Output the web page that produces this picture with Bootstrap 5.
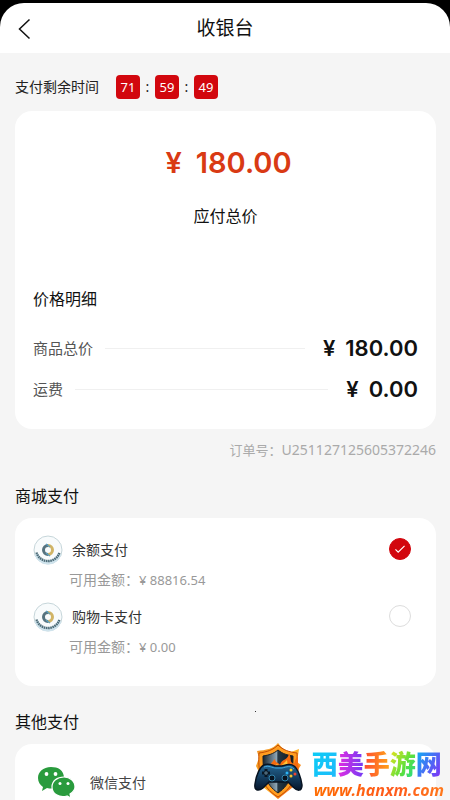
<!DOCTYPE html>
<html lang="zh-CN">
<head>
<meta charset="utf-8">
<meta name="viewport" content="width=device-width, initial-scale=1">
<title>收银台</title>
<link href="https://cdn.jsdelivr.net/npm/bootstrap@5.3.0/dist/css/bootstrap.min.css" rel="stylesheet">
<style>
body{background:#f5f5f5;color:#111;font-family:"Noto Sans","Noto Sans CJK SC",sans-serif;font-size:14px;line-height:20px;overflow-x:hidden}
.status{background:#000;padding-top:3px}
.topbar{background:#fff;height:50px;border-radius:24px 24px 0 0;display:grid;grid-template-columns:50px 1fr 50px}
.topbar h1{font-size:19px;line-height:26px;font-weight:400}
.content{padding:0 14px 0 15px}
.timer{padding:21px 0 12px;color:#222;height:58px;gap:17px}
.tick{background:#d2070e;color:#fff;width:24px;height:24px;border-radius:4px;line-height:24px;text-align:center;font-size:13px}
.sep{width:15px;text-align:center}
.panel{background:#fff;border:0;border-radius:17px}
.price{padding:36px 18px 28px}
.total{font-family:Inter,"Noto Sans",sans-serif;font-size:29px;line-height:32px;font-weight:600;color:#d93a14;gap:14px;padding-left:6px}
.total-label{font-size:16px;line-height:24px;margin-top:25px}
.t16{font-size:16px;line-height:24px;font-weight:400}
.breakdown{margin-top:59px}
.fee{font-size:15px;line-height:24px;color:#555}
.fee-list{gap:17px;margin-top:25px}
.rule{height:1px;background:#f0f0f0;margin:0 18px 0 12px}
.amount{font-family:Inter,"Noto Sans",sans-serif;font-size:22px;font-weight:600;color:#111;gap:10px}
.order{color:#aaa;padding-top:11px}
.label-small,.money{font-size:13px}
.section-title{margin-bottom:10px}
.methods{padding:16px 21px 29px 18px}
.pay-row{height:32px}
.pay-row label{color:#333;margin-left:9px}
.seal{width:30px;height:30px}
.balance{color:#999;padding-left:36px;margin:4px 0 11px}
.pick{width:22px;height:22px;margin:0 4px 3px 0;border:1px solid #ddd;box-shadow:none!important}
.pick:checked{background-color:#d2070e;border-color:#d2070e;background-image:url("data:image/svg+xml,%3Csvg xmlns='http://www.w3.org/2000/svg' viewBox='0 0 22 22'%3E%3Cpath d='M6 11.5 9 14.5 16 7.5' fill='none' stroke='white' stroke-width='1.3'/%3E%3C/svg%3E")}
.other{border-radius:17px 17px 0 0;padding:22px 22px 0;min-height:56px}
.wechat{gap:14px;color:#444;font-size:14px;line-height:20px}
.brand{position:fixed;right:4px;bottom:0;height:58px;gap:8px;text-decoration:none}
.brand-text{padding-top:4px}
.brand-name{font:900 26px/34px "Noto Sans CJK SC",sans-serif}
.brand-name span,.brand-url{background-clip:text;-webkit-background-clip:text;color:transparent}
.c1{background-image:linear-gradient(120deg,#08cff5,#21b8fb)}
.c2{background-image:linear-gradient(90deg,#e12ce1,#713bf5)}
.c3{background-image:linear-gradient(90deg,#ff4b32,#ffa417)}
.c4{background-image:linear-gradient(120deg,#ffe218,#5be03c 60%,#18d8a0)}
.c5{background-image:linear-gradient(120deg,#00bdf2,#8c24f7)}
.brand-url{font:italic 700 16px/20px "Open Sans",sans-serif;padding:0 2px;background-image:linear-gradient(90deg,#ff6d00,#ff5a1c 60%,#ff7a1c)}
.speck{position:absolute;left:255px;top:711px;width:1px;height:1px;background:#333}
</style>
<script src="https://cdn.jsdelivr.net/npm/bootstrap@5.3.0/dist/js/bootstrap.bundle.min.js"></script>
</head>
<body class="d-flex flex-column min-vh-100 position-relative">
<svg class="d-none" aria-hidden="true">
<symbol id="seal" viewBox="0 0 30 30">
<circle cx="15" cy="15" r="14" fill="#f8fbfc" stroke="#b9cbd1" stroke-width=".8"/>
<path d="M3.5 19a12 12 0 0 0 23 0" fill="none" stroke="#cfe3ec" stroke-width="4"/>
<path d="M3.500 17.500a12 12 0 0 0 23 0" fill="none" stroke="#4c6b77" stroke-width="2.400" stroke-dasharray="1.600 .6"/>
<path d="M15 10.500a4.500 4.500 0 0 0 0 9" fill="none" stroke="#56727e" stroke-width="3"/>
<path d="M15 10.500a4.500 4.500 0 0 1 0 9" fill="none" stroke="#d1b465" stroke-width="3"/>
<path d="M13 9l4 3M17 21l-4-3" stroke="#5b9fc0" stroke-width="1.300"/>
</symbol>
</svg>
<header class="status">
<div class="topbar align-items-center">
<button class="btn p-0 border-0 h-100 text-start ps-3" aria-label="返回"><svg width="16" height="22" viewBox="0 0 16 22"><path d="M13.500 1.500 3.500 11l10 9.500" fill="none" stroke="#111" stroke-width="1.500"/></svg></button>
<h1 class="m-0 text-center">收银台</h1>
</div>
</header>
<main class="content d-flex flex-column flex-grow-1">
<div class="timer d-flex align-items-center"><span>支付剩余时间</span><span class="d-flex align-items-center"><span class="tick">71</span><span class="sep">:</span><span class="tick">59</span><span class="sep">:</span><span class="tick">49</span></span></div>
<section class="panel price">
<div class="total d-flex justify-content-center"><span>¥</span><span>180.00</span></div>
<div class="total-label text-center">应付总价</div>
<h2 class="t16 breakdown mb-0">价格明细</h2>
<div class="fee-list d-flex flex-column">
<div class="fee d-flex align-items-center"><span>商品总价</span><span class="rule flex-grow-1"></span><span class="amount d-flex"><span>¥</span><span>180.00</span></span></div>
<div class="fee d-flex align-items-center"><span>运费</span><span class="rule flex-grow-1"></span><span class="amount d-flex"><span>¥</span><span>0.00</span></span></div>
</div>
</section>
<div class="order text-end"><span class="label-small">订单号：</span>U251127125605372246</div>
<h2 class="t16 section-title mt-4">商城支付</h2>
<section class="panel methods">
<div class="pay-row d-flex align-items-center"><svg class="seal"><use href="#seal"/></svg><label for="p1">余额支付</label><input class="form-check-input pick ms-auto" type="radio" name="pay" id="p1" checked></div>
<div class="balance">可用金额：<span class="money">¥ 88816.54</span></div>
<div class="pay-row d-flex align-items-center"><svg class="seal"><use href="#seal"/></svg><label for="p2">购物卡支付</label><input class="form-check-input pick ms-auto" type="radio" name="pay" id="p2"></div>
<div class="balance mb-0">可用金额：<span class="money">¥ 0.00</span></div>
</section>
<h2 class="t16 section-title mt-4">其他支付</h2>
<section class="panel other flex-grow-1">
<button class="btn wechat border-0 p-0 w-100 d-flex align-items-center">
<svg width="39" height="34" viewBox="0 0 39 34"><path d="M14 1C6 1 1 6 1 12c0 4 2 7 5 9l-1 4 5-3c9 2 17-2 17-10S21 1 14 1z" fill="#299b3d"/><path d="M27 11c-7 0-12 4-12 10 0 7 7 11 15 9l4 2-1-4c3-2 5-4 5-7 0-6-5-10-11-10z" fill="#299b3d" stroke="#fff" stroke-width="1.200"/><g fill="#fff"><circle cx="9.500" cy="8" r="1.900"/><circle cx="18.500" cy="8" r="1.900"/><circle cx="23" cy="17.500" r="1.500"/><circle cx="31" cy="17.500" r="1.500"/></g></svg>
<span>微信支付</span>
</button>
</section>
</main>
<i class="speck"></i>
<a class="brand d-flex align-items-center" href="#">
<svg width="52" height="58" viewBox="0 0 52 58"><defs><linearGradient id="fire" x1="0" y1="0" x2="1" y2="1"><stop stop-color="#ee8a20"/><stop offset=".5" stop-color="#ffb629"/><stop offset="1" stop-color="#f04a08"/></linearGradient><linearGradient id="steel"><stop stop-color="#17242f"/><stop offset=".45" stop-color="#8ba3b2"/><stop offset=".5" stop-color="#263844"/><stop offset="1" stop-color="#0b1721"/></linearGradient><linearGradient id="pad" x2="0" y2="1"><stop stop-color="#236795"/><stop offset="1" stop-color="#07152b"/></linearGradient></defs>
<path d="M26 1C21 7 14 8 5 9l2 7-3 8 3 6-4 9 8 6 15 12 15-12 8-6-5-8 5-8-4-3 2-13-8 3C33 9 30 6 26 1z" fill="url(#fire)"/>
<path d="M26 3C21 8 15 10 7 11c-1 18 1 33 19 44 18-11 20-26 19-44-8-1-14-3-19-8z" fill="#ff9d20" stroke="#c34b05"/>
<path d="M26 8c-5 4-9 5-15 6 0 17 2 28 15 37 13-9 15-20 15-37-6-1-10-2-15-6z" fill="url(#steel)" stroke="#182028"/>
<path d="M16 25c3-1 3-5 7-8 0 4 3 3 5 6 2-7 8-4 9-12 3 6 0 9 5 11 1-3 1-5 4-7-1 7 2 10 0 16H16z" fill="#f66b0e"/><path d="M20 26l5-4 3 3 7-7 1 7 5-2v6z" fill="#ffc536"/>
<path d="M12 23c4-2 8 0 11 1h7c4-1 8-3 12 0 4 3 7 12 8 19 0 7-5 6-9 2l-5-5H17l-6 6c-5 4-9 2-8-4 1-9 5-17 9-19z" fill="url(#pad)" stroke="#071321" stroke-width="1.500"/><path d="M12 25c5-2 8 1 12 1h6c5-1 8-3 12 1" fill="none" stroke="#45a7db"/><path d="M14 27v8M10 31h8" stroke="#091622" stroke-width="3"/><path d="M14 29v4M12 31h4" stroke="#638194"/><g fill="#081421" stroke="#3285af"><circle cx="20" cy="36" r="3"/><circle cx="33" cy="36" r="3"/></g><circle cx="39" cy="28" r="1.500" fill="#ffd526"/><circle cx="43" cy="32" r="1.500" fill="#f04432"/><circle cx="35" cy="31" r="1.500" fill="#2cb5f5"/><circle cx="39" cy="34" r="1.500" fill="#f8c12d"/></svg>
<span class="brand-text d-flex flex-column"><span class="brand-name"><span class="c1">西</span><span class="c2">美</span><span class="c3">手</span><span class="c4">游</span><span class="c5">网</span></span><span class="brand-url">www.hanxm.com</span></span>
</a>
</body>
</html>
